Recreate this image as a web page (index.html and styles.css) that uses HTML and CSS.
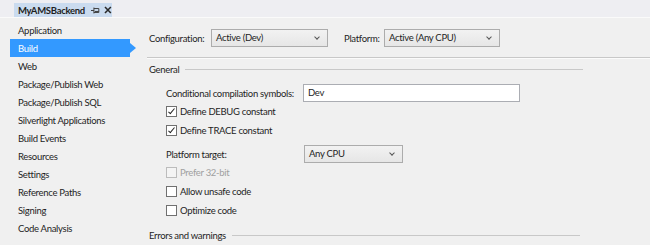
FILE: index.html
```html
<!DOCTYPE html>
<html lang="en">
<head>
    <meta charset="UTF-8">
    <title>MyAMSBackend</title>
    <link rel="stylesheet" href="styles.css">
</head>
<body>
    <div class="tabstrip">
        <div class="doc-tab">
            <span class="doc-title">MyAMSBackend</span>
            <svg class="pin" width="9" height="7" viewBox="0 0 9 7">
                <path d="M0 3.5h3M3 0.5v6M3 1.5h5v4h-5M4 4.5h4" fill="none" stroke="#3c3c3c" stroke-width="1"/>
            </svg>
            <svg class="close" width="8" height="8" viewBox="0 0 8 8">
                <path d="M1 1L7 7M7 1L1 7" stroke="#2a2a2a" stroke-width="1.6"/>
            </svg>
        </div>
    </div>

    <div class="main">
        <ul class="nav">
            <li>Application</li>
            <li class="active">Build</li>
            <li>Web</li>
            <li>Package/Publish Web</li>
            <li>Package/Publish SQL</li>
            <li>Silverlight Applications</li>
            <li>Build Events</li>
            <li>Resources</li>
            <li>Settings</li>
            <li>Reference Paths</li>
            <li>Signing</li>
            <li>Code Analysis</li>
        </ul>

        <div class="content">
            <div class="config-row">
                <label class="config-label">Configuration:</label>
                <div class="combo combo-config">Active (Dev)</div>
                <label class="platform-label">Platform:</label>
                <div class="combo combo-platform">Active (Any CPU)</div>
            </div>
            <div class="rule"></div>

            <div class="section-head"><span>General</span><div class="section-line"></div></div>

            <div class="form">
                <div class="field-row">
                    <label>Conditional compilation symbols:</label>
                    <div class="textbox">Dev</div>
                </div>
                <div class="check-row"><span class="checkbox checked"></span>Define DEBUG constant</div>
                <div class="check-row"><span class="checkbox checked"></span>Define TRACE constant</div>
                <div class="field-row target-row">
                    <label>Platform target:</label>
                    <div class="combo combo-target">Any CPU</div>
                </div>
                <div class="check-row disabled"><span class="checkbox"></span>Prefer 32-bit</div>
                <div class="check-row"><span class="checkbox"></span>Allow unsafe code</div>
                <div class="check-row"><span class="checkbox"></span>Optimize code</div>
            </div>

            <div class="section-head errors-head"><span>Errors and warnings</span><div class="section-line"></div></div>
        </div>
    </div>
</body>
</html>
```

FILE: styles.css
```css
body {
    margin: 0;
    width: 650px;
    height: 245px;
    overflow: hidden;
    background-color: #f0f0f0;
    font-family: Lato, 'Liberation Sans', sans-serif;
    font-size: 9.5px;
    letter-spacing: -0.3px;
    color: #1e1e1e;
}
.tabstrip {
    height: 17px;
    background-color: #eeeef2;
    border-bottom: 1px solid #fafafa;
    display: flex;
    align-items: flex-end;
    padding-left: 14px;
}
.doc-tab {
    height: 14px;
    width: 98px;
    background-color: #cadbef;
    display: flex;
    align-items: center;
    padding-left: 4px;
    box-sizing: border-box;
}
.doc-title {
    font-weight: bold;
    font-size: 9.5px;
    width: 73px;
}
.pin {
    margin-left: 2px;
}
.close {
    margin-left: 4px;
}
.main {
    display: flex;
}
.nav {
    list-style: none;
    margin: 0;
    padding: 3px 0 0 10px;
    width: 137px;
    box-sizing: border-box;
}
.nav li {
    height: 18px;
    line-height: 19px;
    padding-left: 8px;
    width: 120px;
    box-sizing: border-box;
    position: relative;
    white-space: nowrap;
}
.nav li.active {
    background-color: #3399ff;
    color: white;
}
.nav li.active::after {
    content: '';
    position: absolute;
    right: -6px;
    top: 4px;
    border-top: 5px solid transparent;
    border-bottom: 5px solid transparent;
    border-left: 6px solid #3399ff;
}
.content {
    flex: 1;
    padding-left: 10px;
}
.config-row {
    display: flex;
    align-items: center;
    height: 18px;
    margin-top: 11px;
    padding-left: 2px;
}
.config-label {
    width: 62px;
}
.combo {
    height: 18px;
    box-sizing: border-box;
    border: 1px solid #acacac;
    background: linear-gradient(#f2f2f2, #e6e6e6);
    padding-left: 4px;
    line-height: 16px;
    position: relative;
}
.combo::after {
    content: '';
    position: absolute;
    right: 8px;
    top: 5px;
    width: 3px;
    height: 3px;
    border-right: 1.5px solid #555;
    border-bottom: 1.5px solid #555;
    transform: rotate(45deg);
}
.combo-config {
    width: 117px;
}
.platform-label {
    width: 40px;
    margin-left: 16px;
    white-space: nowrap;
}
.combo-platform {
    width: 116px;
}
.rule {
    height: 1px;
    background-color: #c8c8c8;
    border-bottom: 1px solid #fbfbfb;
    margin-top: 10px;
}
.section-head {
    display: flex;
    align-items: center;
    height: 14px;
    margin-top: 3px;
    padding-left: 2px;
}
.section-line {
    height: 1px;
    background-color: #c8c8c8;
    width: 398px;
    margin-left: 6px;
}
.errors-head .section-line {
    width: 348px;
}
.form {
    padding-left: 19px;
    margin-top: 8px;
}
.field-row {
    display: flex;
    align-items: center;
    height: 18px;
}
.field-row label {
    width: 137px;
    white-space: nowrap;
}
.textbox {
    width: 217px;
    height: 18px;
    box-sizing: border-box;
    border: 1px solid #abadb3;
    background-color: white;
    padding-left: 4px;
    line-height: 16px;
}
.check-row {
    display: flex;
    align-items: center;
    height: 19px;
}
.check-row.disabled {
    color: #a0a0a0;
}
.checkbox {
    width: 11px;
    height: 11px;
    box-sizing: border-box;
    border: 1px solid #707070;
    background-color: white;
    margin-right: 3px;
    position: relative;
}
.disabled .checkbox {
    border-color: #bcbcbc;
    background-color: #f4f4f4;
}
.checkbox.checked::after {
    content: '';
    position: absolute;
    left: 3px;
    top: 0px;
    width: 2px;
    height: 6px;
    border-right: 1.5px solid #222;
    border-bottom: 1.5px solid #222;
    transform: rotate(40deg);
}
.target-row {
    margin-top: 5px;
}
.combo-target {
    width: 99px;
    margin-left: 1px;
}
.errors-head {
    margin-top: 8px;
}
```
